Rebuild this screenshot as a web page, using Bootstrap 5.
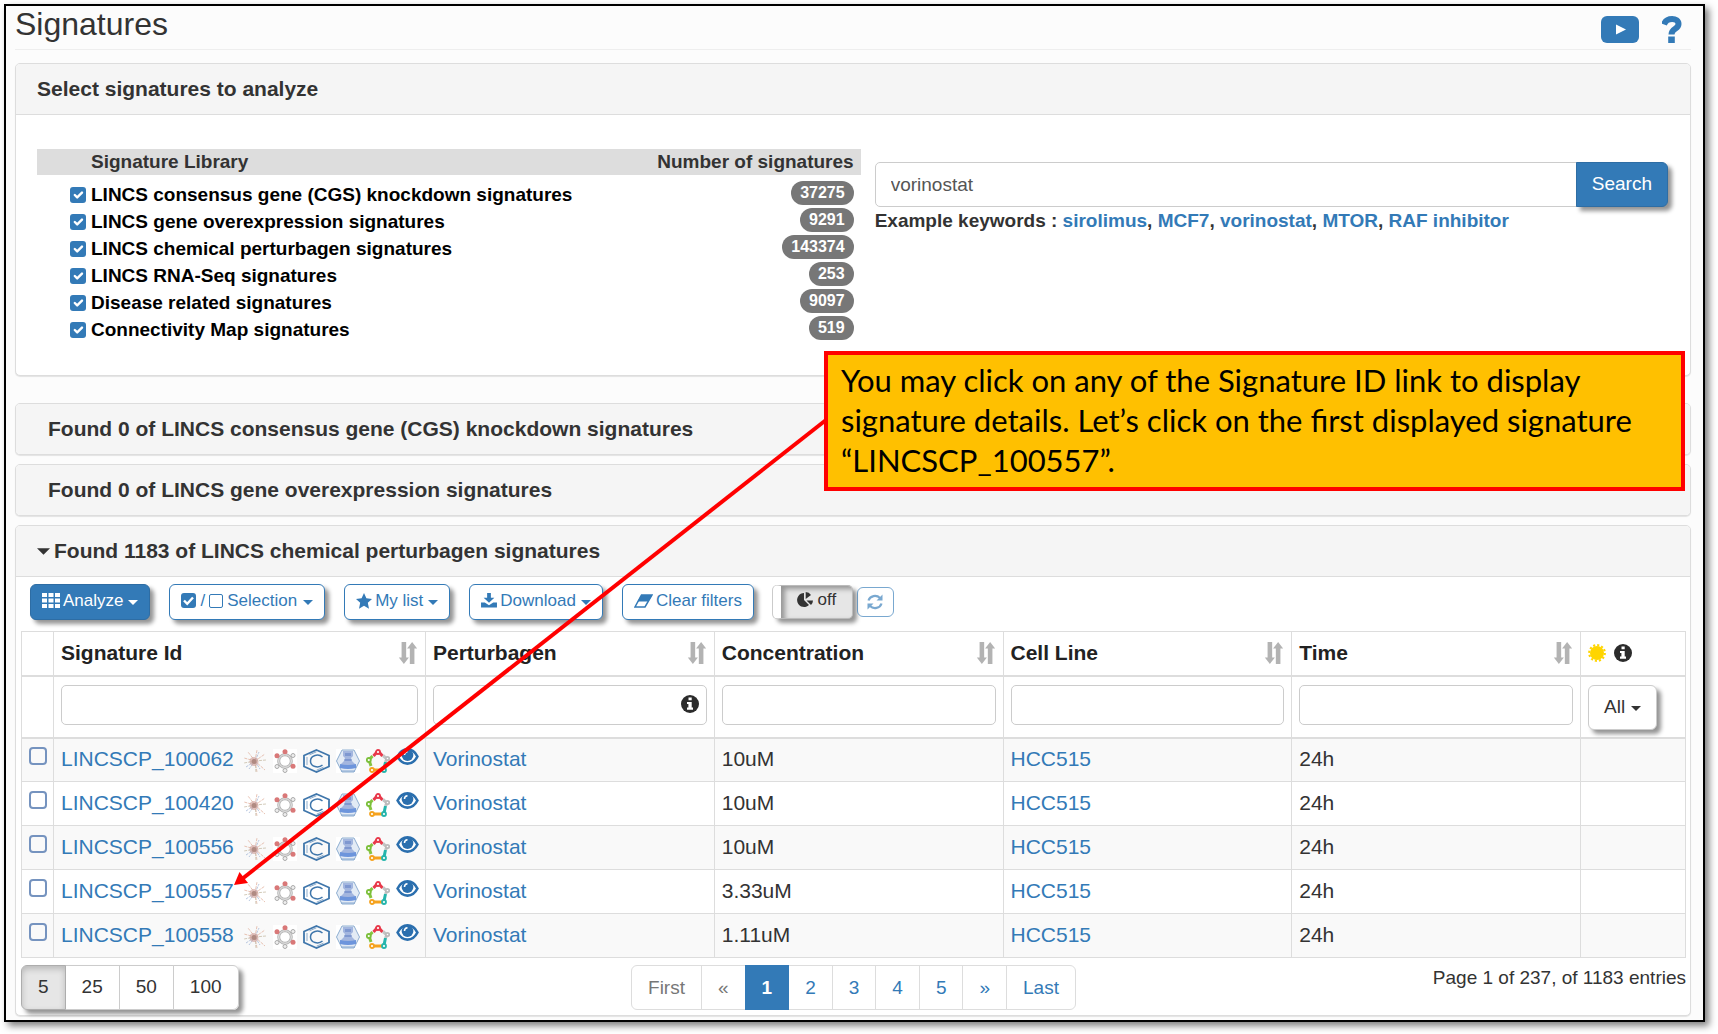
<!DOCTYPE html>
<html lang="en">
<head>
<meta charset="utf-8">
<meta name="viewport" content="width=device-width, initial-scale=1">
<title>Signatures</title>
<link href="https://cdn.jsdelivr.net/npm/bootstrap@5.3.0/dist/css/bootstrap.min.css" rel="stylesheet">
<style>
:root { --brand: #337ab7; --line: #ddd; --ink: #333; }
body { font-family: "Liberation Sans", Arial, sans-serif; font-size: 19px; line-height: 26px; color: var(--ink); background: #fff; padding: 4px 13px 13px 4px; }
a { color: var(--brand); text-decoration: none; }
.app-frame { border: 2px solid #000; background: #fcfcfc; box-shadow: 4px 4px 7px rgba(0,0,0,.5); padding: 1px 12px 4px 9px; }
.page-title { font-size: 32px; line-height: 35px; font-weight: 400; }
.page-head { border-bottom: 1px solid #eee; padding-bottom: 6px; margin-bottom: 13px; }
.head-tools { gap: 23px; padding: 9px 9px 0 0; }
.sig-panel { background: #fff; border: 1px solid var(--line); border-radius: 5px; box-shadow: 0 1px 1px rgba(0,0,0,.1); margin-bottom: 9px; }
.sig-panel.picker-panel { margin-bottom: 27px; }
.sig-panel > h2 { font-size: 21px; line-height: 24px; font-weight: 700; margin: 0; padding: 13px 21px; background: #f5f5f5; border-radius: 4px; }
.sig-panel > h2.closed-title { padding-left: 32px; }
.sig-panel > h2.open-title { border-bottom: 1px solid var(--line); border-radius: 4px 4px 0 0; }
.picker { padding: 34px 22px 32px 21px; gap: 14px; }
.lib-pane { flex: 0 0 50.5%; }
.lib-table { width: 100%; font-size: 19px; font-weight: 700; color: #000; }
.lib-table th { background: #ddd; color: var(--ink); height: 26px; line-height: 26px; padding: 0 7px 0 54px; }
.lib-table td { height: 27px; line-height: 27px; padding: 0 7px 0 33px; vertical-align: middle; }
.lib-table .gap-row td { height: 6px; line-height: 6px; }
.lib-table .form-check-input { width: 16px; height: 16px; margin: 0 5px 0 0; border-radius: 3px; border: 0; flex: none; }
.form-check-input:checked { background-color: var(--brand); }
.count-pill { display: block; width: fit-content; margin-left: auto; background: #777; color: #fff; font-size: 16px; line-height: 24px; border-radius: 12px; padding: 0 9px; }
.search-side { padding-top: 13px; }
.search-row .form-control { height: 45px; font-size: 19px; padding: 0 15px; border-color: #ccc; color: #555; border-radius: 5px 0 0 5px; }
.search-row .btn { height: 45px; font-size: 19px; padding: 0 15px; border-radius: 0 6px 6px 0; }
.hint { font-size: 19px; font-weight: 700; line-height: 27px; }
.btn-brand { background: var(--brand); border: 1px solid #2e6da4; color: #fff; }
.lift { box-shadow: 4px 4px 4px rgba(0,0,0,.42); }
.tools { gap: 19px; padding: 7px 9px 11px; }
.tools .btn { height: 36px; padding: 0 11px 3px; font-size: 17px; line-height: 24px; border-radius: 6px; display: inline-flex; align-items: center; gap: 3px; }
.tools .sel-btn { gap: 4px; }
.btn-line { background: #fff; border: 1px solid var(--brand); color: var(--brand); }
.tri { width: 0; height: 0; border: 5px solid transparent; border-top-color: currentColor; border-bottom: 0; display: inline-block; margin: 3px 0 0 2px; }
.tools .switch-btn { height: 34px; width: 80px; background: #e6e6e6; border: 1px solid #bbb; border-left: 8px solid #fff; border-radius: 5px; color: var(--ink); box-shadow: 4px 4px 4px rgba(0,0,0,.42), inset 4px 3px 5px rgba(0,0,0,.35), -1px 0 0 #ccc; padding: 0 0 4px; gap: 5px; justify-content: center; }
.tools .reload-btn { height: 30px; width: 37px; padding: 0; justify-content: center; opacity: .65; }
.grid-wrap { padding: 0 4px 5px 5px; }
.sig-grid { width: 100%; table-layout: fixed; border-collapse: collapse; font-size: 21px; line-height: 26px; }
.sig-grid th, .sig-grid td { border: 1px solid var(--line); padding: 0 7px; vertical-align: middle; }
.sig-grid .heads th { height: 44px; border-bottom: 2px solid var(--line); color: #222; }
.sig-grid .filters td { height: 62px; border-bottom: 2px solid var(--line); padding-top: 8px; vertical-align: top; }
.sig-grid tbody td { height: 44px; padding-bottom: 2px; }
.sig-grid tbody tr:nth-child(odd) { background: #f9f9f9; }
.sig-grid .form-control { height: 40px; border: 1px solid #ccc; border-radius: 5px; font-size: 19px; }
.sig-grid tbody .form-check-input { display: block; width: 18px; height: 18px; margin: -6px 0 0; border: 2px solid #7593bf; border-radius: 4px; background-color: transparent; }
.col-tick { width: 32px; }
.col-id { width: 372px; }
.col-star { width: 105px; }
.marks { gap: 6px; margin-left: 9px; }
.marks svg { margin-top: 4px; }
.marks svg.eye { margin-top: -4px; }
.info-in { position: absolute; right: 8px; top: 10px; }
.all-btn { height: 45px; font-size: 19px; padding: 0 15px; background: #fff; border: 1px solid #ccc; border-radius: 6px; color: var(--ink); display: inline-flex; align-items: center; gap: 4px; }
.foot-bar { display: grid; grid-template-columns: 1fr auto 1fr; padding-top: 7px; }
.size-group .btn { height: 45px; font-size: 19px; padding: 0 16px; background: #fff; border: 1px solid #ccc; color: var(--ink); }
.size-group .btn.active { background: #e6e6e6; border-color: #adadad; box-shadow: inset 0 3px 6px rgba(0,0,0,.2); }
.size-group { box-shadow: 4px 4px 4px rgba(0,0,0,.42); border-radius: 6px; }
.pagination { --bs-pagination-font-size: 19px; --bs-pagination-color: #337ab7; --bs-pagination-padding-x: 16px; --bs-pagination-padding-y: 8px; --bs-pagination-active-bg: #337ab7; --bs-pagination-active-border-color: #337ab7; --bs-pagination-border-color: #ddd; --bs-pagination-disabled-color: #777; --bs-pagination-disabled-bg: #fff; --bs-pagination-disabled-border-color: #ddd; margin: 0; }
.page-link { height: 45px; line-height: 27px; }
.page-item.active .page-link { font-weight: 700; }
.note-box { position: absolute; left: 824px; top: 351px; width: 861px; height: 140px; background: #ffc000; border: 4px solid #f00; color: #000; font: 400 31px/40px Lato, sans-serif; padding: 5px 13px; z-index: 3; }
.note-arrow { position: absolute; left: 0; top: 0; z-index: 2; pointer-events: none; }
</style>
</head>
<body class="position-relative">

<svg width="0" height="0" class="position-absolute" aria-hidden="true">
  <symbol id="i-sort" viewBox="0 0 20 24"><path fill="#b3b3b3" d="M3 0h5v17h3L5.500 24 0 17h3zM12 24h5V7h3L14.500 0 9 7h3z"/></symbol>
  <symbol id="i-info" viewBox="0 0 18 18"><circle cx="9" cy="9" r="9" fill="#2b2b2b"/><path fill="#fff" d="M7.500 2.500h3.200v2.700H7.500zM6 7h4.700v5.600H12v2.200H6v-2.200h1.400V9.100H6z"/></symbol>
  <symbol id="i-burst" viewBox="0 0 24 24"><g fill="none" stroke-width="1" stroke-dasharray="3 1" opacity=".7"><path stroke="#e0ab96" d="M12 12 1 9M12 12 5 3M12 12l2-11M12 12l10-7M12 12l10 9M12 12l2 11"/><path stroke="#9db2d6" d="M12 12 6 20M12 12l5 8M12 12l4-9M12 12 3 18"/><path stroke="#c3b79f" d="M12 12 1 14M12 12l11-1M12 12l1 11"/></g><circle cx="11" cy="12.500" r="4.500" fill="#c99088" opacity=".55"/><circle cx="11" cy="12.500" r="2.500" fill="#b08a82"/></symbol>
  <symbol id="i-ring" viewBox="0 0 24 24"><path fill="#fff" d="M0 0h24v24H0z"/><circle cx="12" cy="12" r="6.300" fill="none" stroke="#b5b5b5" stroke-width="3"/><circle cx="12" cy="12" r="6.300" fill="none" stroke="#e8e8e8" stroke-width="1"/><g fill="#eee" stroke="#aaa"><circle cx="12" cy="21.500" r="2"/><circle cx="4" cy="17.500" r="2"/><circle cx="20" cy="6.500" r="2"/></g><g fill="#d97878"><circle cx="12" cy="2.700" r="2.500"/><circle cx="4" cy="6.700" r="2.500"/><circle cx="20" cy="17.300" r="2.500"/></g></symbol>
  <symbol id="i-chex" viewBox="0 0 27 24"><g fill="none" stroke="#3f76ab"><path stroke-width="1.800" d="M13.500 1 26 6.500v11L13.500 23 1 17.500v-11z"/><path stroke-width=".6" d="M4 8v8M6.500 5.800l7-3M20.500 18.200l-7 3"/><path stroke-width="1.500" d="M19.500 8C15.500 4.500 7.500 6 7.500 12s8 7.500 12 4"/></g></symbol>
  <symbol id="i-flask" viewBox="0 0 24 24"><path fill="#fff" d="M0 0h24v24H0z"/><path d="M6 1h12l5.500 11L18 23H6L.5 12z" fill="#e3ebf5" stroke="#8caccf"/><path fill="#a3b6df" d="M7 2h10v5l-2 2 1 3 3 3v3H5v-3l3-3 1-3-2-2z"/><path fill="#7f98d0" d="M9 4h6v3H9zM8.500 10h7v2h-7z"/><path fill="#6d95dc" d="M4 15q8 2 16 0v4q-8 2-16 0z"/><path stroke="#86a7d0" d="M5 22h14"/></symbol>
  <symbol id="i-penta" viewBox="0 0 24 24"><g fill="none" stroke-width="3"><path stroke="#e8394a" d="M7.500 7 11 3h2l3.500 4"/><path stroke="#86c440" d="M6.500 7 3 11l2 6"/><path stroke="#c4c4c4" d="m17 6.500 4 3.500-1.500 3"/><path stroke="#25b5ac" d="m19.500 13-1.500 7"/><path stroke="#f5a21e" d="M5 21h12"/></g><g fill="#fff" stroke-width="1.800"><circle cx="12" cy="3" r="2" stroke="#e8394a"/><circle cx="2.800" cy="11" r="2" stroke="#7bbf3a"/><circle cx="21.500" cy="9.500" r="1.700" stroke="#bbb"/><circle cx="6" cy="21" r="2" stroke="#f5a21e"/><circle cx="18" cy="21" r="2" stroke="#25b5ac"/></g></symbol>
  <symbol id="i-eye" viewBox="0 0 24 18"><path d="M1.500 9C4 4 7.500 1.500 12 1.500S20 4 22.500 9C20 14 16.500 16.500 12 16.500S4 14 1.500 9z" fill="#fff" stroke="#2b6fae" stroke-width="2.800"/><circle cx="12" cy="7.500" r="6.200" fill="#2b6fae"/><path d="M8.800 7.500A3.400 3.400 0 0 1 12 4" fill="none" stroke="#fff" stroke-width="1.600"/></symbol>
</svg>

<main class="app-frame">
  <header class="page-head d-flex justify-content-between">
    <h1 class="page-title m-0">Signatures</h1>
    <div class="head-tools d-flex">
      <a href="#" aria-label="Video tutorial"><svg width="38" height="27" viewBox="0 0 38 27" class="d-block"><rect width="38" height="27" rx="6" fill="#337ab7"/><path fill="#fff" d="m15 8.500 10 5-10 5z"/></svg></a>
      <a href="#" aria-label="Help"><svg width="20" height="27" viewBox="0 0 20 27" class="d-block"><path fill="none" stroke="#337ab7" stroke-width="6" d="M2 8.500C4.500 1 16.500 1.500 16.500 8c0 5.500-7 4-7 10.500"/><path fill="#337ab7" d="M6.200 20.500h6.600V27H6.200z"/></svg></a>
    </div>
  </header>

  <section class="sig-panel picker-panel">
    <h2 class="open-title">Select signatures to analyze</h2>
    <div class="picker d-flex">
      <div class="lib-pane">
        <table class="lib-table">
          <thead><tr><th scope="col">Signature Library</th><th scope="col" class="text-end">Number of signatures</th></tr></thead>
          <tbody>
            <tr class="gap-row"><td colspan="2"></td></tr>
            <tr><td><label class="d-flex align-items-center"><input class="form-check-input" type="checkbox" checked>LINCS consensus gene (CGS) knockdown signatures</label></td><td class="align-top"><span class="count-pill">37275</span></td></tr>
            <tr><td><label class="d-flex align-items-center"><input class="form-check-input" type="checkbox" checked>LINCS gene overexpression signatures</label></td><td class="align-top"><span class="count-pill">9291</span></td></tr>
            <tr><td><label class="d-flex align-items-center"><input class="form-check-input" type="checkbox" checked>LINCS chemical perturbagen signatures</label></td><td class="align-top"><span class="count-pill">143374</span></td></tr>
            <tr><td><label class="d-flex align-items-center"><input class="form-check-input" type="checkbox" checked>LINCS RNA-Seq signatures</label></td><td class="align-top"><span class="count-pill">253</span></td></tr>
            <tr><td><label class="d-flex align-items-center"><input class="form-check-input" type="checkbox" checked>Disease related signatures</label></td><td class="align-top"><span class="count-pill">9097</span></td></tr>
            <tr><td><label class="d-flex align-items-center"><input class="form-check-input" type="checkbox" checked>Connectivity Map signatures</label></td><td class="align-top"><span class="count-pill">519</span></td></tr>
          </tbody>
        </table>
      </div>
      <div class="flex-grow-1 search-side">
        <div class="input-group search-row flex-nowrap">
          <input type="text" class="form-control" value="vorinostat" aria-label="Search signatures">
          <button type="button" class="btn btn-brand lift">Search</button>
        </div>
        <div class="hint">Example keywords : <a href="#">sirolimus</a>, <a href="#">MCF7</a>, <a href="#">vorinostat</a>, <a href="#">MTOR</a>, <a href="#">RAF inhibitor</a></div>
      </div>
    </div>
  </section>

  <section class="sig-panel"><h2 class="closed-title">Found 0 of LINCS consensus gene (CGS) knockdown signatures</h2></section>
  <section class="sig-panel"><h2 class="closed-title">Found 0 of LINCS gene overexpression signatures</h2></section>

  <section class="sig-panel mb-0">
    <h2 class="open-title d-flex align-items-center"><svg width="13" height="7" viewBox="0 0 12 6" class="me-1"><path fill="#333" d="M0 0h12L6 6z"/></svg><span>Found 1183 of LINCS chemical perturbagen signatures</span></h2>
    <div class="grid-wrap">
      <div class="tools d-flex align-items-center">
        <button type="button" class="btn btn-brand lift"><svg width="18" height="15" viewBox="0 0 18 15"><path fill="#fff" d="M0 0h5v4H0zM6.500 0h5v4h-5zM13 0h5v4h-5zM0 5.500h5v4H0zM6.500 5.500h5v4h-5zM13 5.500h5v4h-5zM0 11h5v4H0zM6.500 11h5v4h-5zM13 11h5v4h-5z"/></svg>Analyze<span class="tri"></span></button>
        <button type="button" class="btn btn-line lift sel-btn"><svg width="15" height="15" viewBox="0 0 15 15"><rect width="15" height="15" rx="3" fill="#337ab7"/><path fill="none" stroke="#fff" stroke-width="2.400" d="m3 7.500 3.200 3.300L12 4.500"/></svg><span>/</span><svg width="14" height="14" viewBox="0 0 14 14"><rect x=".5" y=".5" width="13" height="13" rx="1.500" fill="none" stroke="#337ab7"/></svg>Selection<span class="tri"></span></button>
        <button type="button" class="btn btn-line lift"><svg width="16" height="16" viewBox="0 0 16 16"><path fill="#337ab7" d="m8 0 2.400 5.300 5.600.6-4.200 3.900L13 15.700 8 12.700l-5 3 1.200-5.900L0 5.900l5.600-.6z"/></svg>My list<span class="tri"></span></button>
        <button type="button" class="btn btn-line lift"><svg width="16" height="15" viewBox="0 0 17 16"><path fill="#337ab7" d="M6.500 0h4v5h3.700L8.500 10.500 2.800 5h3.700zM0 10h4l4.500 3L13 10h4v5.500H0z"/></svg>Download<span class="tri"></span></button>
        <button type="button" class="btn btn-line lift"><svg width="19" height="14" viewBox="0 0 19 14"><path fill="none" stroke="#337ab7" stroke-width="1.500" d="M7.500 1H18l-7 12H1z"/><path fill="#337ab7" d="M7.500 1H18l-3.500 6.500h-11z"/></svg>Clear filters</button>
        <div class="d-flex align-items-center gap-1">
          <button type="button" class="btn switch-btn" role="switch" aria-checked="false"><svg width="16" height="16" viewBox="0 0 16 16"><path fill="#333" d="M7 1v7l5 5A7 7 0 1 1 7 1zM8.700 0A6.500 6.500 0 0 1 14 3L8.700 7zM9.500 8.500H16q0 2.500-2 4.500z"/></svg>off</button>
          <button type="button" class="btn btn-line reload-btn" aria-label="Refresh"><svg width="16" height="16" viewBox="0 0 16 16"><path fill="none" stroke="#337ab7" stroke-width="2.200" d="M1.500 6.500C3 1.500 9.500.5 13 4M14.500 9.500C13 14.500 6.500 15.500 3 12"/><path fill="#337ab7" d="M15.500.5v6h-6zM.5 15.500v-6h6z"/></svg></button>
        </div>
      </div>

      <table class="sig-grid">
        <colgroup><col class="col-tick"><col class="col-id"><col><col><col><col><col class="col-star"></colgroup>
        <thead>
          <tr class="heads">
            <th></th>
            <th scope="col"><div class="d-flex justify-content-between align-items-center">Signature Id<svg width="20" height="22"><use href="#i-sort"/></svg></div></th>
            <th scope="col"><div class="d-flex justify-content-between align-items-center">Perturbagen<svg width="20" height="22"><use href="#i-sort"/></svg></div></th>
            <th scope="col"><div class="d-flex justify-content-between align-items-center">Concentration<svg width="20" height="22"><use href="#i-sort"/></svg></div></th>
            <th scope="col"><div class="d-flex justify-content-between align-items-center">Cell Line<svg width="20" height="22"><use href="#i-sort"/></svg></div></th>
            <th scope="col"><div class="d-flex justify-content-between align-items-center">Time<svg width="20" height="22"><use href="#i-sort"/></svg></div></th>
            <th scope="col" aria-label="Starred"><div class="d-flex align-items-center"><svg width="18" height="18" viewBox="0 0 18 18" class="me-2"><circle cx="9" cy="9" r="7" fill="#ffd500"/><circle cx="9" cy="9" r="7.800" fill="none" stroke="#ffd500" stroke-width="2.200" stroke-dasharray="2.100 1.980"/></svg><svg width="18" height="18"><use href="#i-info"/></svg></div></th>
          </tr>
          <tr class="filters">
            <td></td>
            <td><input type="text" class="form-control" aria-label="Filter Signature Id"></td>
            <td><div class="position-relative"><input type="text" class="form-control" aria-label="Filter Perturbagen"><svg width="18" height="18" class="info-in"><use href="#i-info"/></svg></div></td>
            <td><input type="text" class="form-control" aria-label="Filter Concentration"></td>
            <td><input type="text" class="form-control" aria-label="Filter Cell Line"></td>
            <td><input type="text" class="form-control" aria-label="Filter Time"></td>
            <td><button type="button" class="btn all-btn lift">All<span class="tri"></span></button></td>
          </tr>
        </thead>
        <tbody>
          <tr>
            <td><input class="form-check-input" type="checkbox" aria-label="Select LINCSCP_100062"></td>
            <td><div class="d-flex align-items-center"><a href="#">LINCSCP_100062</a><span class="marks d-flex align-items-center"><svg width="24" height="24"><use href="#i-burst"/></svg><svg width="24" height="24"><use href="#i-ring"/></svg><svg width="27" height="24"><use href="#i-chex"/></svg><svg width="24" height="24"><use href="#i-flask"/></svg><svg width="24" height="24"><use href="#i-penta"/></svg><svg width="23" height="17" class="eye"><use href="#i-eye"/></svg></span></div></td>
            <td><a href="#">Vorinostat</a></td><td>10uM</td><td><a href="#">HCC515</a></td><td>24h</td><td></td>
          </tr>
          <tr>
            <td><input class="form-check-input" type="checkbox" aria-label="Select LINCSCP_100420"></td>
            <td><div class="d-flex align-items-center"><a href="#">LINCSCP_100420</a><span class="marks d-flex align-items-center"><svg width="24" height="24"><use href="#i-burst"/></svg><svg width="24" height="24"><use href="#i-ring"/></svg><svg width="27" height="24"><use href="#i-chex"/></svg><svg width="24" height="24"><use href="#i-flask"/></svg><svg width="24" height="24"><use href="#i-penta"/></svg><svg width="23" height="17" class="eye"><use href="#i-eye"/></svg></span></div></td>
            <td><a href="#">Vorinostat</a></td><td>10uM</td><td><a href="#">HCC515</a></td><td>24h</td><td></td>
          </tr>
          <tr>
            <td><input class="form-check-input" type="checkbox" aria-label="Select LINCSCP_100556"></td>
            <td><div class="d-flex align-items-center"><a href="#">LINCSCP_100556</a><span class="marks d-flex align-items-center"><svg width="24" height="24"><use href="#i-burst"/></svg><svg width="24" height="24"><use href="#i-ring"/></svg><svg width="27" height="24"><use href="#i-chex"/></svg><svg width="24" height="24"><use href="#i-flask"/></svg><svg width="24" height="24"><use href="#i-penta"/></svg><svg width="23" height="17" class="eye"><use href="#i-eye"/></svg></span></div></td>
            <td><a href="#">Vorinostat</a></td><td>10uM</td><td><a href="#">HCC515</a></td><td>24h</td><td></td>
          </tr>
          <tr>
            <td><input class="form-check-input" type="checkbox" aria-label="Select LINCSCP_100557"></td>
            <td><div class="d-flex align-items-center"><a href="#">LINCSCP_100557</a><span class="marks d-flex align-items-center"><svg width="24" height="24"><use href="#i-burst"/></svg><svg width="24" height="24"><use href="#i-ring"/></svg><svg width="27" height="24"><use href="#i-chex"/></svg><svg width="24" height="24"><use href="#i-flask"/></svg><svg width="24" height="24"><use href="#i-penta"/></svg><svg width="23" height="17" class="eye"><use href="#i-eye"/></svg></span></div></td>
            <td><a href="#">Vorinostat</a></td><td>3.33uM</td><td><a href="#">HCC515</a></td><td>24h</td><td></td>
          </tr>
          <tr>
            <td><input class="form-check-input" type="checkbox" aria-label="Select LINCSCP_100558"></td>
            <td><div class="d-flex align-items-center"><a href="#">LINCSCP_100558</a><span class="marks d-flex align-items-center"><svg width="24" height="24"><use href="#i-burst"/></svg><svg width="24" height="24"><use href="#i-ring"/></svg><svg width="27" height="24"><use href="#i-chex"/></svg><svg width="24" height="24"><use href="#i-flask"/></svg><svg width="24" height="24"><use href="#i-penta"/></svg><svg width="23" height="17" class="eye"><use href="#i-eye"/></svg></span></div></td>
            <td><a href="#">Vorinostat</a></td><td>1.11uM</td><td><a href="#">HCC515</a></td><td>24h</td><td></td>
          </tr>
        </tbody>
      </table>

      <div class="foot-bar">
        <div>
          <div class="btn-group size-group" role="group" aria-label="Rows per page">
            <button type="button" class="btn active">5</button><button type="button" class="btn">25</button><button type="button" class="btn">50</button><button type="button" class="btn">100</button>
          </div>
        </div>
        <nav aria-label="Table pages">
          <ul class="pagination">
            <li class="page-item disabled"><a class="page-link" href="#">First</a></li>
            <li class="page-item disabled"><a class="page-link" href="#">«</a></li>
            <li class="page-item active"><a class="page-link" href="#">1</a></li>
            <li class="page-item"><a class="page-link" href="#">2</a></li>
            <li class="page-item"><a class="page-link" href="#">3</a></li>
            <li class="page-item"><a class="page-link" href="#">4</a></li>
            <li class="page-item"><a class="page-link" href="#">5</a></li>
            <li class="page-item"><a class="page-link" href="#">»</a></li>
            <li class="page-item"><a class="page-link" href="#">Last</a></li>
          </ul>
        </nav>
        <div class="text-end">Page 1 of 237, of 1183 entries</div>
      </div>
    </div>
  </section>
</main>

<svg class="note-arrow" width="1000" height="900" aria-hidden="true"><path stroke="#f00" stroke-width="4" d="M826 420 242 879"/><path fill="#f00" d="m234 885 5.500-13 8.500 11z"/></svg>
<aside class="note-box">You may click on any of the Signature ID link to display signature details. Let’s click on the first displayed signature “LINCSCP_100557”.</aside>

<script src="https://cdn.jsdelivr.net/npm/bootstrap@5.3.0/dist/js/bootstrap.bundle.min.js"></script>
</body>
</html>
